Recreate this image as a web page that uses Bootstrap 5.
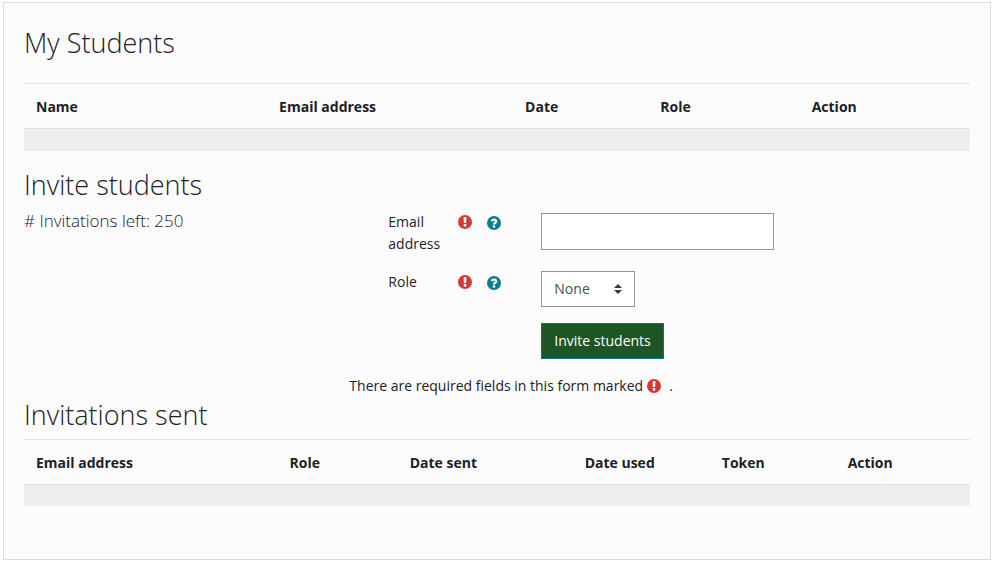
<!DOCTYPE html>
<html lang="en">
<head>
<meta charset="utf-8">
<meta name="viewport" content="width=device-width, initial-scale=1">
<title>My Students</title>
<link href="https://cdn.jsdelivr.net/npm/bootstrap@5.3.0/dist/css/bootstrap.min.css" rel="stylesheet">
<style>
  body { font-family: "Open Sans", "Noto Sans", sans-serif; font-size: 14px; line-height: 22px; color: #1d2125; background: #fff; }
  .panel { margin: 2px 3px 4px; padding: 22px 20px 53px; background: #fcfcfc; border: 1px solid #dcdcdc; }
  .title { font-size: 27px; line-height: 36px; font-weight: 300; margin: 0; }
  .remaining { font-size: 17px; line-height: 24px; font-weight: 300; margin: 0; padding-top: 6px; }
  .invite { --bs-gutter-x: 30px; }
  .listing { --bs-table-bg: transparent; table-layout: fixed; margin: 22px 0 0; color: inherit; }
  .listing-sent { margin-top: 6px; }
  .listing th { padding: 12px 0 10px 12px; border-top: 1px solid #dee2e6; border-bottom: 1px solid #dee2e6; font-weight: 700; }
  .listing td { height: 22px; padding: 0; border: 0; background: #eee; }
  .form-line { display: grid; grid-template-columns: 70px 29px 54px minmax(0, 1fr); padding-left: 39px; }
  .form-line label { line-height: 22px; }
  .form-line svg { margin-top: 4px; }
  .hint { display: block; width: 14px; height: 14px; margin-top: 5px; padding: 0; border: 0; background: none; }
  .hint svg { display: block; margin: 0; }
  .icon { width: 14px; height: 14px; }
  .field { border: 1px solid #8f959e; border-radius: 0; font-size: 14px; background-color: #fff; }
  .email-field { width: 233px; height: 37px; margin-top: 2px; }
  .role-field { width: 94px; height: 36px; padding: 6px 12px; color: #495057;
    background-image: url("data:image/svg+xml,%3Csvg xmlns='http://www.w3.org/2000/svg' viewBox='0 0 4 5'%3E%3Cpath fill='%23343a40' d='M2 0L0 2h4zm0 5L0 3h4z'/%3E%3C/svg%3E");
    background-size: 8px 10px; background-position: right 12px center; }
  .send { height: 36px; padding: 6px 12px; font-size: 14px; line-height: 22px; border-radius: 0; color: #fff; background: #1f5424; border-color: #0f6c8c; }
  .send:hover { color: #fff; background: #184319; }
</style>
<script src="https://cdn.jsdelivr.net/npm/bootstrap@5.3.0/dist/js/bootstrap.bundle.min.js" defer></script>
</head>
<body>
<svg class="d-none" aria-hidden="true">
  <symbol id="required" viewBox="0 0 14 14">
    <circle cx="7" cy="7" r="7" fill="#d43a35"/>
    <path fill="#fff" d="M5.6 2.2h2.8L8.1 8H5.9zM5.8 9h2.4v2.4H5.8z"/>
  </symbol>
  <symbol id="help" viewBox="0 0 14 14">
    <circle cx="7" cy="7" r="7" fill="#0c7c8c"/>
    <path fill="none" stroke="#fff" stroke-width="2.2" d="M4.6 5.1C5.2 3.4 9.3 3 9.3 5.3C9.3 6.8 7 6.7 7 8.6"/>
    <path fill="#fff" d="M5.8 9.4h2.4v2.2H5.8z"/>
  </symbol>
</svg>
<main class="panel">
  <h2 class="title">My Students</h2>
  <table class="table listing">
    <colgroup><col style="width:25.7%"><col style="width:26%"><col style="width:14.3%"><col style="width:16%"><col></colgroup>
    <thead><tr><th scope="col">Name</th><th scope="col">Email address</th><th scope="col">Date</th><th scope="col">Role</th><th scope="col">Action</th></tr></thead>
    <tbody><tr><td colspan="5"></td></tr></tbody>
  </table>

  <h2 class="title mt-3">Invite students</h2>
  <div class="row invite">
    <div class="col-4"><p class="remaining"># Invitations left: 250</p></div>
    <form class="col-8 pt-2">
      <div class="form-line mb-3">
        <label for="email">Email address</label>
        <svg class="icon" role="img" aria-label="Required"><use href="#required"/></svg>
        <button type="button" class="hint" aria-label="Help with email address"><svg class="icon"><use href="#help"/></svg></button>
        <input type="email" id="email" class="form-control field email-field" required>
      </div>
      <div class="form-line mb-3">
        <label for="role">Role</label>
        <svg class="icon" role="img" aria-label="Required"><use href="#required"/></svg>
        <button type="button" class="hint" aria-label="Help with role"><svg class="icon"><use href="#help"/></svg></button>
        <select id="role" class="form-select field role-field"><option>None</option></select>
      </div>
      <div class="form-line mb-3">
        <span></span><span></span><span></span>
        <div><button type="submit" class="btn send">Invite students</button></div>
      </div>
      <div class="d-flex align-items-center">There are required fields in this form marked <svg class="icon ms-1 me-2" role="img" aria-label="Required"><use href="#required"/></svg>.</div>
    </form>
  </div>

  <h2 class="title">Invitations sent</h2>
  <table class="table listing listing-sent">
    <colgroup><col style="width:26.8%"><col style="width:12.7%"><col style="width:18.5%"><col style="width:14.5%"><col style="width:13.3%"><col></colgroup>
    <thead><tr><th scope="col">Email address</th><th scope="col">Role</th><th scope="col">Date sent</th><th scope="col">Date used</th><th scope="col">Token</th><th scope="col">Action</th></tr></thead>
    <tbody><tr><td colspan="6"></td></tr></tbody>
  </table>
</main>
</body>
</html>
